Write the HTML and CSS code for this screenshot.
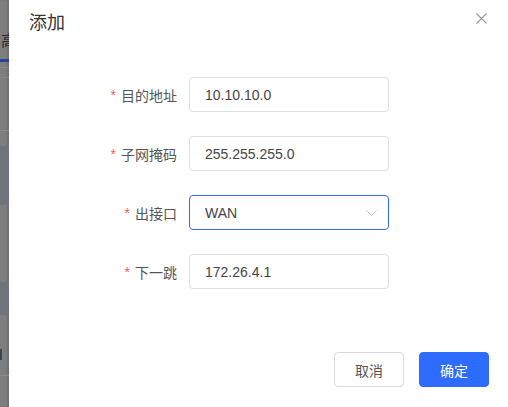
FILE: index.html
```html
<!DOCTYPE html>
<html lang="zh-CN">
<head>
<meta charset="utf-8">
<title>添加</title>
<link rel="stylesheet" href="styles.css">
</head>
<body>
<div class="page">
  <div class="backdrop">
    <div class="bg-tab"><span class="bg-char">高</span></div>
    <div class="bg-active"></div>
    <div class="bg-line l1"></div>
    <div class="bg-line l2"></div>
    <div class="bg-line l3"></div>
    <div class="bg-block b1"></div>
    <div class="bg-gap g1"></div>
    <div class="bg-block b2"></div>
    <div class="bg-mark"></div>
    <div class="bg-line l4"></div>
  </div>
  <div class="dialog">
    <div class="header">
      <div class="title">添加</div>
      <button class="close" aria-label="关闭">
        <svg width="11" height="11" viewBox="0 0 11 11"><path d="M0.5 0.5 L10.5 10.5 M10.5 0.5 L0.5 10.5" stroke="#9a9a9a" stroke-width="1.1" fill="none"/></svg>
      </button>
    </div>
    <div class="form">
      <label class="label"><span class="req">*</span>目的地址</label>
      <div class="input">10.10.10.0</div>
      <label class="label"><span class="req">*</span>子网掩码</label>
      <div class="input">255.255.255.0</div>
      <label class="label"><span class="req">*</span>出接口</label>
      <div class="input select">
        <span>WAN</span>
        <svg class="chev" width="11" height="6" viewBox="0 0 11 6"><path d="M0.5 0.5 L5.5 5.5 L10.5 0.5" stroke="#c0c4cc" stroke-width="1" fill="none"/></svg>
      </div>
      <label class="label"><span class="req">*</span>下一跳</label>
      <div class="input">172.26.4.1</div>
    </div>
    <div class="footer">
      <button class="btn">取消</button>
      <button class="btn primary">确定</button>
    </div>
  </div>
</div>
</body>
</html>
```
FILE: styles.css
```css
html, body {
  margin: 0;
  padding: 0;
  background: #ffffff;
}
body {
  font-family: "Liberation Sans", "Noto Sans CJK SC", sans-serif;
  color: #333333;
}
.page {
  display: flex;
  width: 508px;
  height: 407px;
  overflow: hidden;
}
.backdrop {
  width: 9px;
  flex: none;
  background: #7e7e7e;
  display: flex;
  flex-direction: column;
  box-shadow: inset -2px 0 2px rgba(0,0,0,0.12);
}
.bg-tab {
  height: 59px;
  display: flex;
  align-items: flex-end;
  padding-bottom: 10px;
  box-sizing: border-box;
  overflow: hidden;
}
.bg-char {
  font-size: 15px;
  line-height: 16px;
  color: #2a2a2a;
  margin-left: 1px;
}
.bg-active {
  height: 3px;
  background: #23449a;
}
.bg-line {
  height: 1px;
  background: #8a8a8a;
}
.l1 { margin-top: 5px; }
.l2 { margin-top: 9px; background: #858585; }
.l3 { margin-top: 52px; }
.bg-block {
  background: #6f737b;
}
.b1 { margin-top: 15px; height: 59px; }
.g1 { height: 77px; }
.b2 { height: 33px; }
.bg-mark {
  margin-top: 34px;
  width: 2px;
  height: 11px;
  background: #3e4450;
}
.l4 { margin-top: 15px; }

.dialog {
  flex: 1;
  background: #ffffff;
  display: flex;
  flex-direction: column;
}
.header {
  display: flex;
  justify-content: space-between;
  align-items: flex-start;
  padding: 11px 21px 0 20px;
  height: 36px;
}
.title {
  font-size: 18px;
  line-height: 24px;
  color: #333333;
}
.close {
  border: 0;
  background: none;
  padding: 0;
  margin-top: 2px;
  width: 11px;
  height: 11px;
  display: flex;
}
.form {
  margin-top: 30px;
  display: grid;
  grid-template-columns: 168px 200px;
  column-gap: 12px;
  row-gap: 24px;
}
.label {
  justify-self: end;
  align-self: center;
  font-size: 14px;
  color: #555555;
  display: flex;
  align-items: center;
}
.req {
  color: #f25c5c;
  margin-right: 5px;
  font-family: "Liberation Sans", sans-serif;
}
.input {
  height: 35px;
  box-sizing: border-box;
  border: 1px solid #dcdfe6;
  border-radius: 4px;
  padding: 0 15px;
  display: flex;
  align-items: center;
  font-size: 14px;
  color: #444444;
}
.select {
  border-color: #2f6bff;
  justify-content: space-between;
  padding-right: 11px;
}
.chev {
  display: block;
}
.footer {
  margin-top: auto;
  display: flex;
  justify-content: flex-end;
  gap: 15px;
  padding: 0 19px 20px 0;
}
.btn {
  width: 70px;
  height: 35px;
  border: 1px solid #d9d9d9;
  border-radius: 4px;
  background: #ffffff;
  color: #555555;
  font-size: 14px;
  font-family: "Liberation Sans", "Noto Sans CJK SC", sans-serif;
  padding: 0;
}
.primary {
  background: #2e6bff;
  border-color: #2e6bff;
  color: #ffffff;
}
```
